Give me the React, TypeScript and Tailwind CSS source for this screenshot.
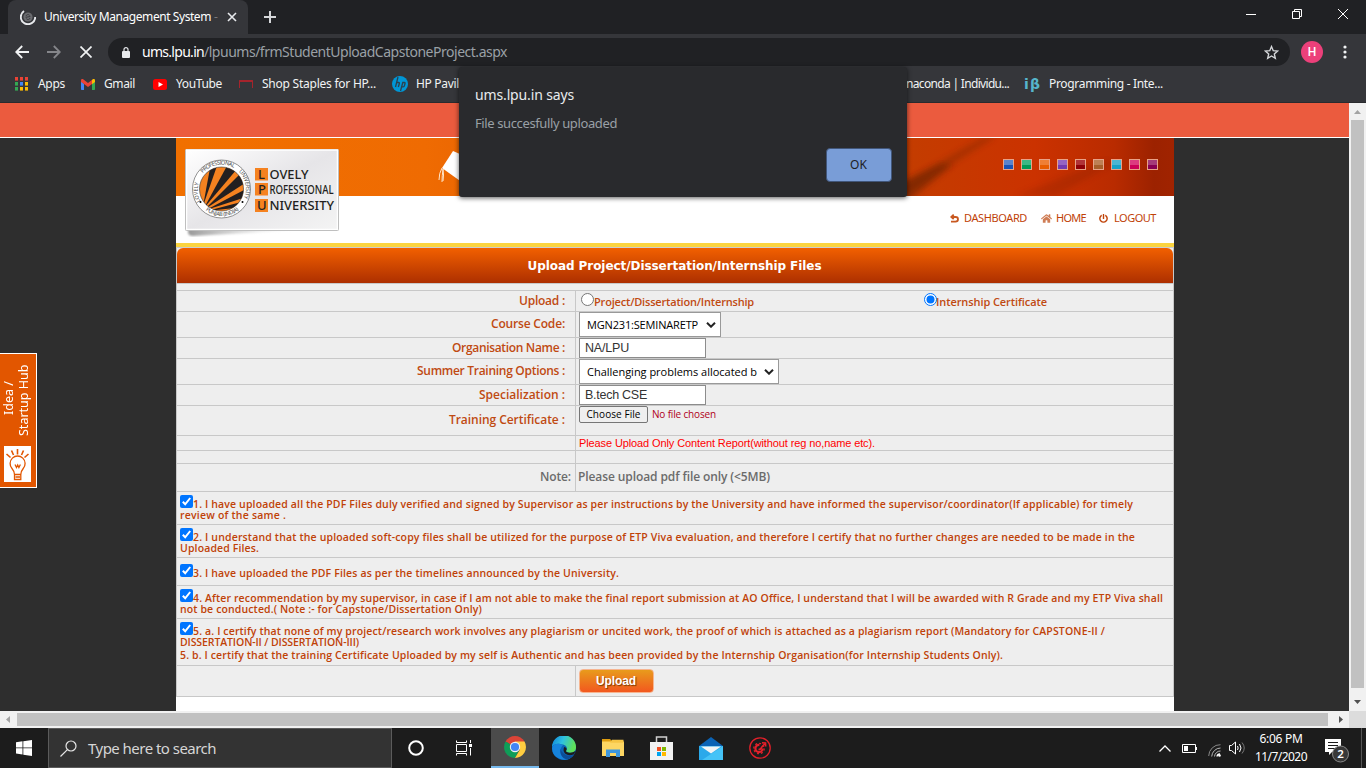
import { useLayoutEffect, useRef, type ReactNode } from "react";
import { FaHome, FaPowerOff } from "react-icons/fa";

/* Single-line text whose tracking is adjusted so that it spans `w` pixels. */
function Fit({ w, children, className = "" }: { w: number; children: string; className?: string }) {
  const ref = useRef<HTMLSpanElement>(null);
  useLayoutEffect(() => {
    const el = ref.current;
    if (!el) return;
    el.style.letterSpacing = "0px";
    const natural = el.getBoundingClientRect().width;
    el.style.letterSpacing = (w - natural) / children.length + "px";
  }, [w, children]);
  return (
    <span ref={ref} className={"inline-block shrink-0 whitespace-pre " + className}>
      {children}
    </span>
  );
}

function Bookmark({ icon, children, w }: { icon: ReactNode; children: string; w: number }) {
  return (
    <div className="flex items-center gap-2">
      {icon}
      <Fit w={w}>{children}</Fit>
    </div>
  );
}

function TabStrip() {
  return (
    <div className="flex h-[34px] bg-[#202124] text-[#e8eaed]">
      <div className="ml-2 flex h-[34px] w-[240px] items-center rounded-t-lg bg-[#35363a] pl-3">
        <svg width="16" height="16" viewBox="0 0 16 16" fill="none">
          <circle cx="8" cy="8" r="4.6" fill="#6a6b6f" />
          <path d="M6 7.2a2 2 0 0 1 3.6-.8M10 9a2 2 0 0 1-3.7.6M5.6 8.4l4.8-1" stroke="#3c3d41" />
          <path d="M4 2A7.200 7.200 0 1 0 15.200 8" stroke="#e8eaed" strokeWidth="1.900" />
        </svg>
        <div className="ml-2 flex w-[175px] overflow-hidden text-[12px] leading-[16px] text-white">
          <Fit w={167}>University Management System</Fit>
          <span className="ml-[3px] text-[#77787c]">-</span>
        </div>
        <svg className="ml-[8px]" width="10" height="10" viewBox="0 0 10 10" stroke="#e8eaed" strokeWidth="1.6">
          <path d="M1 1l8 8M9 1l-8 8" />
        </svg>
      </div>
      <svg className="ml-4 mt-[11px]" width="12" height="12" viewBox="0 0 12 12" stroke="#d5d7da" strokeWidth="2">
        <path d="M6 0v12M0 6h12" />
      </svg>
      <div className="ml-auto mr-[18px] flex gap-9 pt-[9px]">
        <svg width="10" height="10" viewBox="0 0 10 10" stroke="#fff"><path d="M0 5.5h10" /></svg>
        <svg width="10" height="10" viewBox="0 0 10 10" stroke="#fff" fill="none"><path d="M.5 2.5h7v7h-7zM2.5 2.5v-2h7v7h-2" /></svg>
        <svg width="10" height="10" viewBox="0 0 10 10" stroke="#fff"><path d="M0 0l10 10M10 0L0 10" /></svg>
      </div>
    </div>
  );
}

function AddressBar() {
  return (
    <div className="flex h-9 items-center">
      <svg className="ml-[15px]" width="14" height="14" viewBox="0 0 14 14" fill="none" stroke="#f1f3f4" strokeWidth="1.8">
        <path d="M14 7H1.5M7.2 1L1.2 7l6 6" />
      </svg>
      <svg className="ml-[18px]" width="14" height="14" viewBox="0 0 14 14" fill="none" stroke="#85868a" strokeWidth="1.8">
        <path d="M0 7h12.5M6.8 1l6 6-6 6" />
      </svg>
      <svg className="ml-[19px]" width="12" height="12" viewBox="0 0 12 12" stroke="#f1f3f4" strokeWidth="1.7">
        <path d="M.5.5l11 11M11.500.5l-11 11" />
      </svg>
      <div className="ml-4 flex h-7 w-[1182px] items-center rounded-full bg-[#202124] pl-[14px] pr-[11px] text-[14px]">
        <svg width="8" height="11" viewBox="0 0 8 11" fill="#e8eaed">
          <path d="M1 4h6a1 1 0 0 1 1 1v5a1 1 0 0 1-1 1H1a1 1 0 0 1-1-1V5a1 1 0 0 1 1-1z" />
          <path d="M2 5V2.600a2 2 0 0 1 4 0V5" fill="none" stroke="#e8eaed" strokeWidth="1.200" />
        </svg>
        <Fit w={62} className="-mt-px ml-3 text-white">ums.lpu.in</Fit>
        <Fit w={303} className="-mt-px text-[#9aa0a6]">/lpuums/frmStudentUploadCapstoneProject.aspx</Fit>
        <svg className="ml-auto" width="15" height="15" viewBox="0 0 24 24" fill="none" stroke="#d5d7da" strokeWidth="2.2">
          <path d="M12 2.500l2.800 6.600 7 .600-5.300 4.700 1.600 7L12 17.600l-6.100 3.800 1.600-7L2.200 9.700l7-.600z" />
        </svg>
      </div>
      <div className="ml-[11px] flex h-[22px] w-[22px] items-center justify-center rounded-full bg-[#ec407a] font-['Roboto'] text-[12px] font-medium text-white">H</div>
      <svg className="ml-5" width="4" height="14" viewBox="0 0 4 14" fill="#f1f3f4">
        <circle cx="2" cy="2" r="1.600" /><circle cx="2" cy="7" r="1.600" /><circle cx="2" cy="12" r="1.600" />
      </svg>
    </div>
  );
}

const appDots = ["#ea4335", "#ea4335", "#ea4335", "#34a853", "#4285f4", "#fbbc04", "#34a853", "#fbbc04", "#fbbc04"];

function Bookmarks() {
  return (
    <div className="flex h-[33px] items-center pb-[5px] text-[12px] text-[#f1f3f4]">
      <div className="ml-[15px] flex w-[90px]">
        <Bookmark w={27} icon={
          <svg className="mr-[2px]" width="13" height="14" viewBox="0 0 13 14">
            {appDots.map((c, i) => <rect key={i} x={(i % 3) * 5} y={Math.floor(i / 3) * 5} width="3" height="3.600" fill={c} />)}
          </svg>
        }>Apps</Bookmark>
      </div>
      <div className="-ml-[24px] flex w-[72px]">
        <Bookmark w={31} icon={
          <svg className="mr-[1px]" width="14" height="11" viewBox="0 0 14 11">
            <path d="M0 2v8.200a.8.800 0 0 0 .8.800H3V5z" fill="#4285f4" />
            <path d="M14 2v8.200a.8.800 0 0 1-.8.800H11V5z" fill="#34a853" />
            <path d="M0 1.500C0 0 1.500-.300 2.500.500L7 4l4.500-3.500L11 5 7 8 3 5 0 3z" fill="#ea4335" />
            <path d="M11 1l.5-.500C12.500-.300 14 0 14 1.500V3l-3 2.300z" fill="#fbbc04" />
          </svg>
        }>Gmail</Bookmark>
      </div>
      <div className="flex w-[86px]">
        <Bookmark w={46} icon={
          <svg className="mr-[1px]" width="14" height="11" viewBox="0 0 14 11">
            <rect width="14" height="11" rx="2.500" fill="#f00" /><path d="M5.500 3v5L10 5.500z" fill="#fff" />
          </svg>
        }>YouTube</Bookmark>
      </div>
      <div className="flex w-[153px]">
        <Bookmark w={114} icon={<div className="mr-[1px] h-[8px] w-[14px] rounded-t-[1px] border border-b-0 border-t-2 border-[#a5242c]" />}>Shop Staples for HP...</Bookmark>
      </div>
      <div className="flex w-[500px]">
        <Bookmark w={43} icon={
          <svg width="16" height="16" viewBox="0 0 16 16">
            <circle cx="8" cy="8" r="8" fill="#0096d6" />
            <path d="M6 1L3.500 11M5 6.500h1.500c1 0 1 .5.800 1.200L6.300 11M8.500 15l2.300-8.500h1.400c1 0 1 .5.800 1.300l-.6 2c-.2.700-.5 1-1.200 1H9.600" fill="none" stroke="#2b4250" strokeWidth="1.300" />
          </svg>
        }>HP Pavil</Bookmark>
      </div>
      <div className="-ml-[18px] flex w-[135px] justify-end"><Fit w={103}>naconda | Individu...</Fit></div>
      <div className="ml-[15px] flex items-center">
        <Fit w={17} className="font-['DejaVu_Sans'] text-[14px] font-bold leading-4 text-[#56b5cc]">iβ</Fit>
        <Fit w={114} className="ml-2">Programming - Inte...</Fit>
      </div>
    </div>
  );
}

function Logo() {
  return (
    <div className="absolute left-[9px] top-[10px] h-[90px] w-[158px]">
      <svg width="158" height="90" viewBox="0 0 158 90">
        <defs>
          <linearGradient id="card" x1="0" y1="0" x2="1" y2="1"><stop offset="0" stopColor="#fff" /><stop offset=".5" stopColor="#e6e5e8" /><stop offset="1" stopColor="#f4f4f4" /></linearGradient>
          <linearGradient id="shade" x1="0" y1="0" x2="1" y2="0"><stop offset="0" stopColor="#999" /><stop offset="1" stopColor="#fff" stopOpacity="0" /></linearGradient>
          <filter id="shadeBlur"><feGaussianBlur stdDeviation="1.200" /></filter>
          <clipPath id="sun"><circle cx="36.500" cy="41" r="22" /></clipPath>
          <path id="ringTop" d="M12 41a24.500 24.500 0 0 1 49 0a24.500 24.500 0 0 1-3 11" />
          <path id="ringLow" d="M17.500 59.500a26.500 26.500 0 0 0 42-4" />
          <path id="ringLeft" d="M18.300 57.500a24.500 24.500 0 0 1-1-30" />
        </defs>
        <path d="M3 80L130 81 8 88Q3 88 3 84z" fill="url(#shade)" filter="url(#shadeBlur)" />
        <rect x=".5" y="1.500" width="153" height="81" rx="1" fill="url(#card)" stroke="#aaa" />
        <rect x="1.500" y="2" width="151" height="79.500" fill="none" stroke="#fff" strokeWidth="1.500" />
        <circle cx="36.500" cy="41" r="29" fill="#fff" stroke="#777" strokeWidth=".8" />
        <circle cx="36.500" cy="41" r="22" fill="#f58220" stroke="#333" strokeWidth=".6" />
        <g clipPath="url(#sun)" fill="#231f20">
          <path d="M18 58L26 15h7z" /><path d="M19 60L43 16l9 5z" /><path d="M20 61L55 26l5 9z" /><path d="M21 62L61 41v8z" /><path d="M22 63L60 53v6z" />
        </g>
        <g fontFamily="Noto Sans" fontSize="5.500" fill="#444">
          <text><textPath href="#ringTop" startOffset="17" textLength="34">PROFESSIONAL</textPath></text>
          <text><textPath href="#ringTop" startOffset="57" textLength="29">UNIVERSITY</textPath></text>
          <text><textPath href="#ringLeft" startOffset="5" textLength="19">LOVELY</textPath></text>
          <text><textPath href="#ringLow" startOffset="4" textLength="36">PUNJAB (INDIA)</textPath></text>
        </g>
        <circle cx="15.500" cy="54" r="1" /><circle cx="57.500" cy="54" r="1" />
        <g fill="#f58220"><rect x="70" y="20" width="13" height="12.500" /><rect x="70" y="35" width="13" height="12.500" /><rect x="70" y="51" width="13" height="13" /></g>
        <g fontFamily="Noto Sans" fontWeight="500" fontSize="13" fill="#231f20">
          <text x="73" y="30.500">L</text><text x="73" y="46">P</text><text x="72" y="62">U</text>
          <text x="84.500" y="30.500" textLength="39" lengthAdjust="spacingAndGlyphs">OVELY</text>
          <text x="84.500" y="46" textLength="64" lengthAdjust="spacingAndGlyphs">ROFESSIONAL</text>
          <text x="84.500" y="61.500" textLength="64.500" lengthAdjust="spacingAndGlyphs">NIVERSITY</text>
        </g>
      </svg>
    </div>
  );
}

function Swatches() {
  return (
    <div className="relative ml-auto mr-4 mt-[21px] flex gap-[7px]">
      <i className="h-[11px] w-[11px] border border-[#e8a288] bg-[linear-gradient(#5a83cc_50%,#1852b5_50%)]" />
      <i className="h-[11px] w-[11px] border border-[#e8a288] bg-[linear-gradient(#3bb885_50%,#009a57_50%)]" />
      <i className="h-[11px] w-[11px] border border-[#e8a288] bg-[linear-gradient(#ef7f35_50%,#e85d00_50%)]" />
      <i className="h-[11px] w-[11px] border border-[#e8a288] bg-[linear-gradient(#9564c4_50%,#743bb0_50%)]" />
      <i className="h-[11px] w-[11px] border border-[#e8a288] bg-[linear-gradient(#b03338_50%,#8e0007_50%)]" />
      <i className="h-[11px] w-[11px] border border-[#e8a288] bg-[linear-gradient(#bd8055_50%,#a65e2b_50%)]" />
      <i className="h-[11px] w-[11px] border border-[#e8a288] bg-[linear-gradient(#4bb6d2_50%,#18a1c6_50%)]" />
      <i className="h-[11px] w-[11px] border border-[#e8a288] bg-[linear-gradient(#dc3b80_50%,#cc0058_50%)]" />
      <i className="h-[11px] w-[11px] border border-[#e8a288] bg-[linear-gradient(#a53b79_50%,#870052_50%)]" />
    </div>
  );
}

function Banner() {
  return (
    <div className="relative">
      <div className="relative flex h-[58px] overflow-hidden bg-[linear-gradient(90deg,#f17000_0%,#ef6b02_25%,#d85000_55%,#c43c00_74%,#cb3200_86%,#b92b00_94%,#9c2200_98%,#a02300_100%)]">
        <svg className="absolute inset-0" width="998" height="58" viewBox="0 0 998 58">
          <defs><filter id="soft"><feGaussianBlur stdDeviation="3" /></filter></defs>
          <path d="M725 58L820 -2h-10L715 52v-8l-5 14z" fill="#7c2500" opacity=".45" filter="url(#soft)" />
          <path d="M720 62V48l45-22 12 0-44 36z" fill="#6c2200" opacity=".6" filter="url(#soft)" />
          <path d="M840 58L930 22l10 2-60 34z" fill="#7c1a00" opacity=".25" filter="url(#soft)" />
          <path d="M277 13l-11 17 28 20 22-20z" fill="#fff" />
          <path d="M266 30q-3 5-3 12M267 31q-1 7-1 13M267 31q1 6 0 12" fill="none" stroke="#ffe6cc" />
        </svg>
        <Swatches />
      </div>
      <div className="flex h-[47px] items-center justify-end bg-white pb-[2px] pr-[18px] text-[11px] text-[#c04208]">
        <svg width="9" height="9" viewBox="0 0 9 9" fill="none" stroke="#c85820" strokeWidth="1.800"><path d="M1 7.600h4.500q2.500 0 2.500-2.300T5.500 3H1.500M3.700.600L1.300 3l2.400 2.200" /></svg>
        <Fit w={63} className="ml-[5px]">DASHBOARD</Fit>
        <FaHome className="ml-[14px] h-[11px] w-[11px] text-[#cf7d55]" />
        <Fit w={30} className="ml-1">HOME</Fit>
        <FaPowerOff className="ml-[13px] h-[9px] w-[9px]" />
        <Fit w={42} className="ml-[6px]">LOGOUT</Fit>
      </div>
      <Logo />
    </div>
  );
}

function Row({ h, label, w, right, children, extra = "" }: { h: string; label?: string; w?: number; right?: string; children?: ReactNode; extra?: string }) {
  return (
    <div className={"flex border-b border-[#c8c8c8] " + h}>
      <div className={"flex w-[399px] items-center justify-end border-r border-[#c8c8c8] pb-px text-[12px] font-semibold text-[#c04a12] " + (right ?? "pr-[10px]") + " " + extra}>
        {label && <Fit w={w ?? 60}>{label}</Fit>}
      </div>
      <div className="flex flex-1 items-start pl-[3px]">{children}</div>
    </div>
  );
}

function Radio({ on }: { on?: boolean }) {
  return (
    <svg width="13" height="13" viewBox="0 0 13 13">
      <circle cx="6.500" cy="6.500" r="6" fill="#fff" stroke={on ? "#0075ff" : "#767676"} />
      {on && <circle cx="6.500" cy="6.500" r="4" fill="#0075ff" />}
    </svg>
  );
}

function Select({ children, w, box }: { children: string; w: number; box: string }) {
  return (
    <div className={"flex h-[25px] items-center border border-[#999] bg-white pl-[7px] pt-[1px] text-[11px] text-black " + box}>
      <div className="overflow-hidden"><Fit w={w}>{children}</Fit></div>
      <svg className="mb-[1px] ml-auto mr-1" width="10" height="6" viewBox="0 0 10 6" fill="none" stroke="#222" strokeWidth="2"><path d="M1 .7l4 4 4-4" /></svg>
    </div>
  );
}

function Check() {
  return (
    <svg className="shrink-0" width="13" height="13" viewBox="0 0 13 13">
      <rect width="13" height="13" rx="2" fill="#0075ff" />
      <path d="M2.800 6.800l2.400 2.500 5-6.300" fill="none" stroke="#fff" strokeWidth="2" />
    </svg>
  );
}

function Clause({ h, first, w, rest, rw, pad = "pt-[3px]", children }: { h: string; first: string; w: number; rest?: string; rw?: number; pad?: string; children?: ReactNode }) {
  return (
    <div className={"border-b border-[#c8c8c8] pl-[3px] text-[10.5px] font-semibold leading-[11px] text-[#c04208] " + h + " " + pad}>
      <div className="flex h-[15px]">
        <Check />
        <Fit w={w} className="pt-[4px]">{first}</Fit>
      </div>
      {rest && <div className="flex h-[11px]"><Fit w={rw ?? 100}>{rest}</Fit></div>}
      {children}
    </div>
  );
}

function Form() {
  return (
    <div className="border-x border-[#c8c8c8] bg-[#eee] font-['Open_Sans']">
      <div className="flex h-[35px] items-center justify-center rounded-t-[6px] bg-[linear-gradient(#f26000,#ad2f00)] font-['DejaVu_Sans'] text-[12px] font-bold text-white">
        <Fit w={294} className="-ml-px">Upload Project/Dissertation/Internship Files</Fit>
      </div>
      <div className="h-2 border-b border-t border-[#c8c8c8]" />
      <Row h="h-[21px]" label="Upload :" w={46}>
        <div className="flex w-full pl-[2px] pt-[2px] text-[11px] font-semibold leading-[18px] text-[#c04a12]">
          <Radio /><Fit w={160}>Project/Dissertation/Internship</Fit>
          <span className="w-[170px]" />
          <Radio on /><Fit w={111} className="-ml-px">Internship Certificate</Fit>
        </div>
      </Row>
      <Row h="h-[26px]" label="Course Code:" w={74}><Select w={111} box="w-[142px]">MGN231:SEMINARETP</Select></Row>
      <Row h="h-[21px]" label="Organisation Name :" w={113}>
        <div className="flex h-5 w-[127px] items-center border border-[#8c8c8c] bg-white pl-[5px] font-['Liberation_Sans'] text-[12.5px] text-[#333]"><Fit w={44}>NA/LPU</Fit></div>
      </Row>
      <Row h="h-[26px]" label="Summer Training Options :" w={148}>
        <Select w={170} box="w-[200px]">Challenging problems allocated b</Select>
      </Row>
      <Row h="h-[21px]" label="Specialization :" w={86}>
        <div className="flex h-5 w-[127px] items-center border border-[#8c8c8c] bg-white pl-[5px] font-['Liberation_Sans'] text-[12.5px] text-[#333]"><Fit w={62}>B.tech CSE</Fit></div>
      </Row>
      <Row h="h-[30px]" label="Training Certificate :" w={116}>
        <div className="flex items-center text-[10px] leading-4">
          <div className="flex h-[17px] w-[69px] items-center justify-center rounded-[2px] border border-[#767676] bg-[#efefef] pb-px text-black"><Fit w={54}>Choose File</Fit></div>
          <Fit w={64} className="-mt-px ml-1 text-[#b00020]">No file chosen</Fit>
        </div>
      </Row>
      <Row h="h-[15px]"><Fit w={296} className="font-['Liberation_Sans'] text-[11px] leading-[15px] text-[#f00]">Please Upload Only Content Report(without reg no,name etc).</Fit></Row>
      <Row h="h-[13px]" />
      <Row h="h-[28px]" label="Note:" w={31} right="pr-[4px]" extra="text-[#6b6b6b]!">
        <Fit w={192} className="-ml-px text-[12px] font-semibold leading-[26px] text-[#6b6b6b]">{"Please upload pdf file only (<5MB)"}</Fit>
      </Row>
      <Clause h="h-[33px]" w={940} rw={106} first="1. I have uploaded all the PDF Files duly verified and signed by Supervisor as per instructions by the University and have informed the supervisor/coordinator(If applicable) for timely" rest="review of the same ." />
      <Clause h="h-[33px]" w={942} rw={79} first="2. I understand that the uploaded soft-copy files shall be utilized for the purpose of ETP Viva evaluation, and therefore I certify that no further changes are needed to be made in the" rest="Uploaded Files." />
      <Clause h="h-[28px]" pad="pt-[6px]" w={426} first="3. I have uploaded the PDF Files as per the timelines announced by the University." />
      <Clause h="h-[33px]" w={970} rw={302} first="4. After recommendation by my supervisor, in case if I am not able to make the final report submission at AO Office, I understand that I will be awarded with R Grade and my ETP Viva shall" rest="not be conducted.( Note :- for Capstone/Dissertation Only)" />
      <Clause h="h-[47px]" w={912} rw={179} first="5. a. I certify that none of my project/research work involves any plagiarism or uncited work, the proof of which is attached as a plagiarism report (Mandatory for CAPSTONE-II /" rest="DISSERTATION-II / DISSERTATION-III)">
        <div className="flex pt-[2px]"><Fit w={823}>5. b. I certify that the training Certificate Uploaded by my self is Authentic and has been provided by the Internship Organisation(for Internship Students Only).</Fit></div>
      </Clause>
      <Row h="h-[31px]">
        <div className="mt-[3px] flex h-6 w-[75px] items-center justify-center rounded-[4px] border border-[#f7b590] bg-[linear-gradient(#e89b1c,#f2581f)] pr-px font-['Liberation_Sans'] text-[12px] font-bold text-white [text-shadow:1px_1px_1px_#7a3a00]"><Fit w={40}>Upload</Fit></div>
      </Row>
    </div>
  );
}

function IdeaTab() {
  return (
    <div className="absolute left-0 top-[250px] flex h-[135px] w-[37px] flex-col border border-l-0 border-white bg-[#e25600]">
      <div className="h-[92px] w-[36px] rotate-180 whitespace-nowrap pr-px text-[12.5px] leading-[15px] text-white [writing-mode:vertical-rl]">
        <div className="w-[15px] pt-[31px]">Idea /</div>
        <div className="w-[15px] pt-[10px]">Startup Hub</div>
      </div>
      <svg className="ml-1" width="27" height="36" viewBox="0 0 27 36" fill="none" stroke="#e25600" strokeWidth="1.300">
        <rect width="27" height="36" fill="#fff" stroke="none" />
        <path d="M10.500 28.500q0-3-2.500-6a7.500 7.500 0 1 1 11.200 0q-2.400 3-2.400 6zM10.500 29v4.500h6.300V29M11.500 31h4.500M11 18.500l1.500 3 1.200-2.500 1.200 2.500 1.500-3" />
        <path d="M2.500 8l4 3.500M7.500 4.500l2 4.500M13.500 3v5.500M19.500 4.500l-2 4.500M24.500 8l-4 3.500" strokeWidth="1.600" />
      </svg>
    </div>
  );
}

function Page() {
  return (
    <div className="flex h-[608px]">
      <div className="relative h-full w-[1349px] overflow-hidden bg-[#2e2e2e]">
        <div className="h-[35px] border-b border-white bg-[#eb5b3e]" />
        <div className="ml-[176px] h-[573px] w-[998px] bg-white">
          <Banner />
          <div className="h-[5px] border-b border-[#cdcdcd] bg-[#fbd440]" />
          <Form />
        </div>
        <IdeaTab />
      </div>
      <div className="flex w-[17px] flex-col items-center bg-[#f1f1f1]">
        <svg width="17" height="17" viewBox="0 0 17 17" fill="#a3a3a3"><path d="M5 11l3.500-4L12 11z" /></svg>
        <div className="h-[568px] w-[13px] bg-[#c1c1c1]" />
        <svg className="mt-auto" width="17" height="17" viewBox="0 0 17 17" fill="#505050"><path d="M5 6l3.500 4L12 6z" /></svg>
      </div>
    </div>
  );
}

function Dialog() {
  return (
    <div className="absolute left-[459px] top-[67px] flex h-[130px] w-[448px] flex-col rounded-[3px] bg-[#292a2d] px-4 shadow-[0_1px_5px_rgba(0,0,0,0.65)]">
      <div className="pt-[18px] text-[14px] leading-5 text-[#e8eaed]"><Fit w={99}>ums.lpu.in says</Fit></div>
      <div className="pt-[9px] text-[13px] leading-[18px] text-[#9aa0a6]"><Fit w={142}>File succesfully uploaded</Fit></div>
      <div className="-mr-[1px] ml-auto mt-[16px] flex h-[34px] w-[66px] items-center justify-center rounded-[4px] border border-[#41567a] bg-[#799dd7] pr-px text-[12px] text-[#202124]"><Fit w={17}>OK</Fit></div>
    </div>
  );
}

function Taskbar() {
  return (
    <div className="flex h-10 items-center bg-[#1c1c1c] text-white">
      <svg className="ml-4" width="16" height="16" viewBox="0 0 16 16" fill="#fff"><path d="M0 2.200l6.500-.900v6.200H0zM7.300 1.200L16 0v7.500H7.300zM0 8.300h6.500v6.200L0 13.600zM7.300 8.300H16V16l-8.700-1.200z" /></svg>
      <div className="ml-4 flex h-10 w-[344px] items-center border border-[#5b5b5b] bg-[#333] pl-[11px] text-[15px] text-[#d6d6d6]">
        <svg width="17" height="17" viewBox="0 0 17 17" fill="none" stroke="#e6e6e6" strokeWidth="1.200"><circle cx="11" cy="6" r="5" /><path d="M7.400 9.600L.5 16.500" /></svg>
        <Fit w={128} className="ml-[11px]">Type here to search</Fit>
      </div>
      <svg className="ml-4" width="16" height="16" viewBox="0 0 16 16" fill="none" stroke="#fff" strokeWidth="2"><circle cx="8" cy="8" r="6.800" /></svg>
      <svg className="ml-8" width="16" height="16" viewBox="0 0 16 16" fill="none" stroke="#fff"><path d="M.5.500v2h10v-2M.5 4.500h10v7H.5zM.5 15.500v-2h10v2M14.500 0v3M14.500 8v7.500" /><rect x="13" y="4" width="3" height="3" fill="#fff" stroke="none" /></svg>
      <div className="ml-[19px] flex h-10 w-12 items-center justify-center border-b-2 border-[#76b9ed] bg-[#4b4b4b]">
        <svg width="22" height="22" viewBox="0 0 22 22"><path d="M11 11L1.500 5.500A11 11 0 0 1 20.500 5.500z" fill="#db4437" /><path d="M11 11L1.500 5.500A11 11 0 0 0 11 22l4-8z" fill="#0f9d58" /><path d="M11 5.500h9.500A11 11 0 0 1 11 22l4.800-8.200z" fill="#ffcd40" /><circle cx="11" cy="11" r="5.200" fill="#f1f1f1" /><circle cx="11" cy="11" r="4.100" fill="#4285f4" /></svg>
      </div>
      <svg className="ml-[13px]" width="24" height="24" viewBox="0 0 24 24">
        <defs><linearGradient id="edge" x1="0" y1="0" x2="1" y2=".3"><stop offset="0" stopColor="#0c7fd8" /><stop offset=".5" stopColor="#2fc2df" /><stop offset="1" stopColor="#5fe05a" /></linearGradient></defs>
        <circle cx="12" cy="12" r="12" fill="#0b63b5" />
        <path d="M0 11A12 12 0 0 1 24 11.500C24 16 20 17.500 16.500 16.500 14 16 13.500 15 14.500 14 16 11 13 8.500 10 8.500 6 6.500 1 8.500 0 11z" fill="url(#edge)" />
        <path d="M0 12C1 7 8 6.500 11 9.500 8 11 8 17 12 19.500q4 2 9.500-.5A12 12 0 0 1 0 12z" fill="#1683dc" />
        <path d="M8.700 12.500C7 17 10 23 15.500 23.400A12 12 0 0 0 22 18.500Q16 21.500 11.500 17.500 8.500 15 8.700 12.500z" fill="#0c4c96" />
        <path d="M12.300 11q2.800.5 2.200 3-1.500 1.500 1.500 2.500 4 1 7.500-1.500l-1.500 3.300q-5.500 2.200-9-.8-2.500-3-.7-6.500z" fill="#1c1c1c" />
      </svg>
      <svg className="ml-[26px]" width="22" height="18" viewBox="0 0 22 18"><path d="M0 0h8l2 2v4H0z" fill="#e09e10" /><rect y="2.500" width="22" height="14.500" fill="#fdd663" /><path d="M10 .8h11.500v3H8z" fill="#f6c544" /><path d="M4 18v-7.500h14V18h-4v-4H8v4z" fill="#3e96dc" /></svg>
      <svg className="ml-[26px]" width="23" height="24" viewBox="0 0 23 24"><path d="M6.500 7V1h10v6" fill="none" stroke="#d0d0d0" strokeWidth="1.500" /><rect y="6" width="23" height="18" fill="#f2f2f2" /><path d="M7 11h4v4H7z" fill="#f25022" /><path d="M12 11h4v4h-4z" fill="#7fba00" /><path d="M7 16h4v4H7z" fill="#00a4ef" /><path d="M12 16h4v4h-4z" fill="#ffb900" /></svg>
      <svg className="ml-[26px]" width="24" height="23" viewBox="0 0 24 23"><path d="M0 9L12 0l12 9v3H0z" fill="#0b63b5" /><path d="M0 9h24v14H0z" fill="#2ba9ea" /><path d="M24 9v14H3z" fill="#45c3f7" /><path d="M2 9.500h20L12 16.500z" fill="#f4f4f4" /></svg>
      <svg className="ml-[26px]" width="22" height="22" viewBox="0 0 22 22" fill="none" stroke="#e3202a"><circle cx="11" cy="11" r="10.200" strokeWidth="1.300" /><circle cx="10" cy="11.500" r="3.600" strokeWidth="2.200" strokeDasharray="17 5.600" /><circle cx="10" cy="11.500" r="5.200" strokeWidth="1.300" strokeDasharray="2 2" /><path d="M9.500 12.500q2.500 0 3-2l3.500-4M13 5.800l3.500.200.200 3.500" strokeWidth="1.600" /></svg>
      <div className="ml-auto flex h-10 items-center">
        <svg width="12" height="7" viewBox="0 0 12 7" fill="none" stroke="#fff" strokeWidth="1.300"><path d="M.5 6.500L6 1l5.500 5.500" /></svg>
        <svg className="ml-[11px]" width="15" height="9" viewBox="0 0 15 9" fill="none" stroke="#fff"><path d="M.5.500h13v8H.5zM14.500 3v3" /><rect x="2" y="2" width="4" height="5" fill="#fff" stroke="none" /></svg>
        <svg className="ml-[11px] mt-1" width="13" height="13" viewBox="0 0 13 13" fill="none" stroke="#888"><path d="M.7 12A11.500 11.500 0 0 1 12.500.700" /><path d="M3.700 12.500A9 9 0 0 1 12.500 4M6.500 12.500a6 6 0 0 1 6-5.500" stroke="#b5b5b5" /><path d="M9 12.500a3 3 0 0 1 3-2.500" stroke="#fff" strokeWidth="1.400" /><circle cx="11.500" cy="11.500" r="1.300" fill="#fff" stroke="none" /></svg>
        <svg className="ml-2" width="17" height="14" viewBox="0 0 17 14" fill="none" stroke="#fff"><path d="M.5 4.500h2L6.500 1v12L2.500 9.500h-2zM8.500 5q1.300 2 0 4M10.500 3q3 4 0 8" /><path d="M13 1.500q4.500 5.500 0 11" stroke="#777" /></svg>
        <div className="ml-[7px] flex w-[56px] flex-col items-center text-[12px] leading-[18px]"><Fit w={43}>6:06 PM</Fit><Fit w={52}>11/7/2020</Fit></div>
        <svg className="ml-4 mt-1" width="25" height="25" viewBox="0 0 25 25"><path d="M0 1h16v13H7l-3 3v-3H0z" fill="#fff" /><path d="M3 4.500h10M3 7.500h10M3 10.500h7" stroke="#1c1c1c" /><circle cx="15.500" cy="16" r="8" fill="#383838" stroke="#888" /><text x="15.500" y="20" textAnchor="middle" fontFamily="Noto Sans" fontSize="11.500" fontWeight="600" fill="#fff">2</text></svg>
        <div className="ml-[11px] mr-1 h-10 w-px bg-[#555]" />
      </div>
    </div>
  );
}

export default function App() {
  return (
    <div className="relative flex h-[768px] w-[1366px] flex-col overflow-hidden bg-[#2e2e2e] font-['Noto_Sans',sans-serif]">
      <TabStrip />
      <div className="h-[69px] border-b border-[#2a2b2e] bg-[#35363a]">
        <AddressBar />
        <Bookmarks />
      </div>
      <Page />
      <div className="flex h-[17px] items-center bg-[#f1f1f1]">
        <svg width="17" height="17" viewBox="0 0 17 17" fill="#a3a3a3"><path d="M10 5L6 8.500 10 12z" /></svg>
        <div className="h-[13px] w-[1311px] bg-[#c1c1c1]" />
        <svg className="ml-1" width="17" height="17" viewBox="0 0 17 17" fill="#505050"><path d="M7 5l4 3.500L7 12z" /></svg>
        <div className="ml-auto h-full w-[17px] bg-[#dcdcdc]" />
      </div>
      <Taskbar />
      <Dialog />
    </div>
  );
}
